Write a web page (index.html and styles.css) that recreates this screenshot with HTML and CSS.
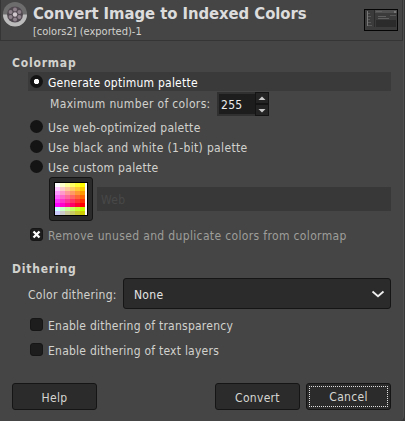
FILE: index.html
```html
<!DOCTYPE html>
<html lang="en">
<head>
<meta charset="utf-8">
<title>Convert Image to Indexed Colors</title>
<link rel="stylesheet" href="styles.css">
</head>
<body>
<main class="dialog">
  <header class="header">
    <svg class="logo" width="24" height="25" viewBox="0 0 24 25">
      <circle cx="12" cy="12" r="12" fill="#6d6d6d"/>
      <path d="M0 12.500A12 12 0 0 0 24 12.500Z" fill="#bcbcbc"/>
      <circle cx="12" cy="12.500" r="8" fill="#514950"/>
      <g fill="#8f818b"><circle cx="12" cy="7.500" r="2"/><circle cx="7.600" cy="10" r="2"/><circle cx="16.400" cy="10" r="2"/><circle cx="7.600" cy="15" r="2"/><circle cx="16.400" cy="15" r="2"/><circle cx="12" cy="17.500" r="2"/></g>
      <circle cx="12" cy="12.500" r="2.200" fill="#d0c8cd"/>
    </svg>
    <div class="titles">
      <h1 class="title">Convert Image to Indexed Colors</h1>
      <p class="subtitle">[colors2] (exported)-1</p>
    </div>
    <svg class="thumb" width="34" height="22" viewBox="0 0 34 22" shape-rendering="crispEdges">
      <path d="M0 0H34V22H0Z" fill="#050505"/>
      <path d="M1 1H33V21H1Z" fill="#3b3b3b"/>
      <path d="M11 1H33V4H11Z" fill="#505050"/>
      <path d="M12 11H32V18H12Z" fill="#2b2b2b"/>
      <path d="M10 1H11V18H10Z" fill="#2b2b2b"/>
      <path d="M3 2H4V17H3ZM30 2H32V4H30Z" fill="#777"/>
      <path d="M12 2H18V3H12ZM14 7H22V8H14ZM14 9H25V10H14Z" fill="#606060"/>
      <path d="M4 4H6V5H4ZM4 7H7V8H4ZM4 10H6V11H4ZM4 13H7V14H4ZM4 16H8V17H4ZM26 6H32V7H26Z" fill="#585858"/>
    </svg>
  </header>

  <section class="colormap">
    <h2 class="heading">Colormap</h2>
    <label class="option selected"><i class="radio on"></i><span class="tight">Generate optimum palette</span></label>
    <div class="maximum">
      <span class="loose">Maximum number of colors:</span>
      <div class="spin"><span class="value">255</span>
        <div class="steps"><b><svg width="8" height="5"><path d="M.500 4L4 .500L7.500 4Z" fill="#c9c9c9"/></svg></b><b><svg width="8" height="5"><path d="M.500 1L4 4.500L7.500 1Z" fill="#c9c9c9"/></svg></b></div>
      </div>
    </div>
    <label class="option"><i class="radio"></i><span>Use web-optimized palette</span></label>
    <label class="option"><i class="radio"></i><span class="loose">Use black and white (1-bit) palette</span></label>
    <label class="option"><i class="radio"></i><span>Use custom palette</span></label>
    <div class="palette-row">
      <div class="palette-button">
        <svg width="34" height="34" viewBox="0 0 34 34" shape-rendering="crispEdges">
          <path d="M0 0H34V34H0Z" fill="#000"/><path d="M1 1H33V33H1Z" fill="#fff"/>
          <path d="M1 1h5v4h-5z" fill="#fff"/><path d="M6 1h5v4h-5z" fill="#ffc"/><path d="M11 1h5v4h-5z" fill="#ff9"/><path d="M16 1h5v4h-5z" fill="#ff6"/><path d="M21 1h5v4h-5z" fill="#ff3"/><path d="M26 1h5v4h-5z" fill="#ff0"/>
          <path d="M1 5h5v4h-5z" fill="#fcf"/><path d="M6 5h5v4h-5z" fill="#fcc"/><path d="M11 5h5v4h-5z" fill="#fc9"/><path d="M16 5h5v4h-5z" fill="#fc6"/><path d="M21 5h5v4h-5z" fill="#fc3"/><path d="M26 5h5v4h-5z" fill="#fc0"/>
          <path d="M1 9h5v4h-5z" fill="#f9f"/><path d="M6 9h5v4h-5z" fill="#f9c"/><path d="M11 9h5v4h-5z" fill="#f99"/><path d="M16 9h5v4h-5z" fill="#f96"/><path d="M21 9h5v4h-5z" fill="#f93"/><path d="M26 9h5v4h-5z" fill="#f90"/>
          <path d="M1 13h5v4h-5z" fill="#f6f"/><path d="M6 13h5v4h-5z" fill="#f6c"/><path d="M11 13h5v4h-5z" fill="#f69"/><path d="M16 13h5v4h-5z" fill="#f66"/><path d="M21 13h5v4h-5z" fill="#f63"/><path d="M26 13h5v4h-5z" fill="#f60"/>
          <path d="M1 17h5v4h-5z" fill="#f3f"/><path d="M6 17h5v4h-5z" fill="#f3c"/><path d="M11 17h5v4h-5z" fill="#f39"/><path d="M16 17h5v4h-5z" fill="#f36"/><path d="M21 17h5v4h-5z" fill="#f33"/><path d="M26 17h5v4h-5z" fill="#f30"/>
          <path d="M1 21h5v4h-5z" fill="#f0f"/><path d="M6 21h5v4h-5z" fill="#f0c"/><path d="M11 21h5v4h-5z" fill="#f09"/><path d="M16 21h5v4h-5z" fill="#f06"/><path d="M21 21h5v4h-5z" fill="#f03"/><path d="M26 21h5v4h-5z" fill="#f00"/>
          <path d="M1 25h5v4h-5z" fill="#cff"/><path d="M6 25h5v4h-5z" fill="#cfc"/><path d="M11 25h5v4h-5z" fill="#cf9"/><path d="M16 25h5v4h-5z" fill="#cf6"/><path d="M21 25h5v4h-5z" fill="#cf3"/><path d="M26 25h5v4h-5z" fill="#cf0"/>
          <path d="M1 29h5v4h-5z" fill="#ccf"/><path d="M6 29h5v4h-5z" fill="#ccc"/><path d="M11 29h5v4h-5z" fill="#cc9"/><path d="M16 29h5v4h-5z" fill="#cc6"/><path d="M21 29h5v4h-5z" fill="#cc3"/><path d="M26 29h5v4h-5z" fill="#cc0"/>
        </svg>
      </div>
      <div class="palette-name">Web</div>
    </div>
    <label class="check dim"><i class="box"><svg width="9" height="9" viewBox="0 0 9 9"><path d="M1.500 1.500L7.500 7.500M7.500 1.500L1.500 7.500" stroke="#fff" stroke-width="2.300"/></svg></i><span class="loose">Remove unused and duplicate colors from colormap</span></label>
  </section>

  <section class="dithering">
    <h2 class="heading">Dithering</h2>
    <div class="select-row"><span>Color dithering:</span>
      <div class="select"><span>None</span><svg width="14" height="8" viewBox="0 0 14 8"><path d="M1.500 1.500L7 6.300L12.500 1.500" fill="none" stroke="#eee" stroke-width="1.800"/></svg></div>
    </div>
    <label class="check"><i class="box"></i><span class="tight">Enable dithering of transparency</span></label>
    <label class="check"><i class="box"></i><span class="tight">Enable dithering of text layers</span></label>
  </section>

  <footer class="actions">
    <button class="button help">Help</button>
    <button class="button">Convert</button>
    <button class="button focused"><span class="focus-ring">Cancel</span></button>
  </footer>
</main>
</body>
</html>
```

FILE: styles.css
```css
* { box-sizing: border-box; }
body {
  margin: 0;
  background: #363636;
  color: #d2d2ce;
  font: 12px/16px "DejaVu Sans Condensed", "DejaVu Sans", sans-serif;
  font-stretch: condensed;
  letter-spacing: .3px;
  white-space: nowrap;
}
h1, h2, p { margin: 0; }
i, b { display: block; }
.dialog { width: 404px; height: 421px; overflow: hidden; background: #454545; border-right: 1px solid #505050; border-bottom-right-radius: 5px; }
.header { display: flex; width: 403px; height: 41px; border: 1px solid #353535; border-top: 0; }
.logo { margin: 2px 0 0 2px; }
.titles { margin-left: 6px; flex: 1; }
.title { font-size: 16.500px; line-height: 20px; margin-top: 4px; color: #dcdcdc; letter-spacing: -.05px; }
.subtitle { font-size: 11px; line-height: 14px; margin-top: 1px; letter-spacing: 0; }
.thumb { margin: 9px 4px 0 0; }
.colormap { padding: 13px 12px 0 12px; }
.heading { font-size: 12px; line-height: 18px; height: 18px; letter-spacing: .8px; }
.option { display: flex; align-items: center; height: 20px; margin-left: 16px; padding-left: 2px; gap: 5px; }
.option span, .check span { line-height: 16px; padding-top: 2px; height: 18px; }
.selected { height: 19px; background: #3a3a3a; color: #fff; }
.tight { letter-spacing: .24px; }
.loose { letter-spacing: .35px; }
.radio { width: 13px; height: 13px; margin-bottom: 1px; border-radius: 50%; background: #141414; }
.on { background: radial-gradient(circle, #fff 2.300px, #141414 3px); }
.maximum { display: flex; height: 26px; margin-left: 38px; padding-top: 1px; align-items: flex-start; }
.maximum > span { width: 167px; line-height: 25px; }
.spin { display: flex; width: 52px; height: 24px; background: #1d1d1d; border: 2px solid #303030; border-right: 0; }
.value { width: 36px; padding-left: 2px; line-height: 22px; color: #eee; }
.steps { width: 14px; margin: -2px 0; background: #141414; padding: 1px; display: grid; gap: 2px; }
.steps b { background: #242424; display: grid; place-items: center; }
.palette-row { display: flex; align-items: flex-start; gap: 4px; margin-left: 37px; height: 45px; }
.palette-button { width: 44px; height: 44px; display: grid; place-items: center; background: #2b2b2b; border: 1px solid #151515; border-radius: 3px; }
.palette-name { flex: 1; height: 24px; margin-top: 10px; line-height: 27px; padding-left: 4px; background: #383838; color: #484848; }
.check { display: flex; align-items: center; gap: 5px; height: 25px; margin-left: 18px; }
.box { width: 13px; height: 13px; border-radius: 3px; background: #1d1d1d; border: 1px solid #161616; display: grid; place-items: center; }
.dim { color: #9e9e9a; }
.dithering { padding: 13px 12px 0 12px; }
.select-row { display: flex; margin: 0 0 3px 16px; align-items: center; height: 31px; }
.select-row > span { width: 95px; padding-top: 2px; }
.select { flex: 1; height: 31px; display: flex; align-items: center; justify-content: space-between; padding: 0 5px 0 10px; background: #2b2b2b; border: 1px solid #151515; border-radius: 3px; color: #e4e4e4; }
.select span { padding-top: 2px; }
.actions { display: flex; gap: 6px; padding: 0 12px; margin-top: 21px; }
.button { width: 85px; height: 27px; padding: 2px; background: #2b2b2b; border: 1px solid #151515; border-radius: 3px; font: inherit; font-stretch: condensed; letter-spacing: .3px; color: #d6d6d2; padding-top: 4px; }
.help { margin-right: auto; }
.focused { padding-top: 2px; }
.focus-ring { display: block; height: 21px; line-height: 21px; border: 1px dotted #e0e0e0; }
```
